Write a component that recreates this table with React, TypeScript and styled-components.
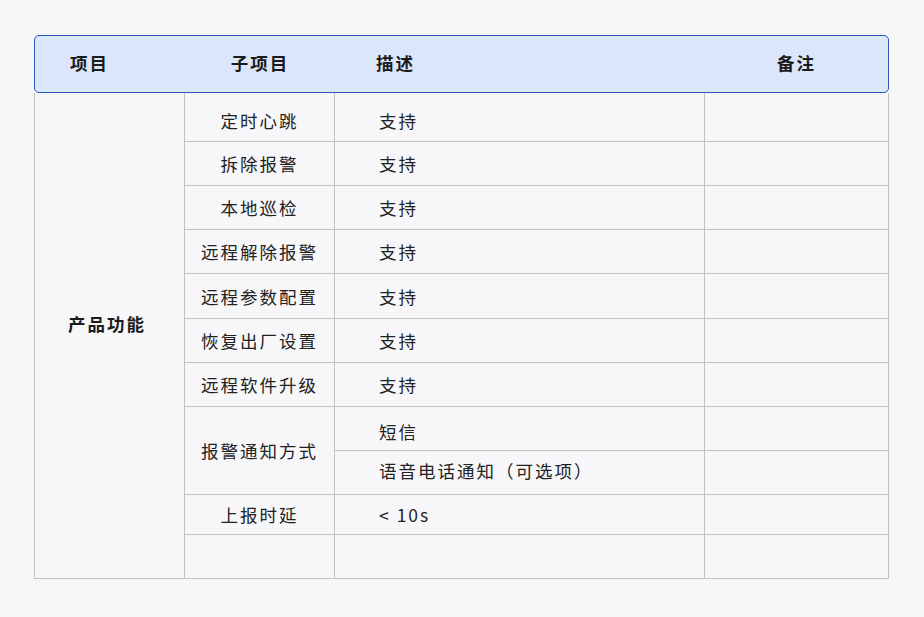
import React from "react";
import styled, { createGlobalStyle } from "styled-components";

const GlobalStyle = createGlobalStyle`
  html, body {
    margin: 0;
    padding: 0;
    background: #f7f7fa;
  }
  body {
    font-family: "Noto Sans CJK SC", "Noto Sans", sans-serif;
    color: #222;
  }
`;

const COLUMNS = "150px 150px 370px 184px";
const HEAD_COLUMNS = "150px 150px 370px 183px";

interface SubRow {
  name: string;
  desc: string;
  height: number;
}

const simpleRows: SubRow[] = [
  { name: "定时心跳", desc: "支持", height: 49 },
  { name: "拆除报警", desc: "支持", height: 44 },
  { name: "本地巡检", desc: "支持", height: 44 },
  { name: "远程解除报警", desc: "支持", height: 44 },
  { name: "远程参数配置", desc: "支持", height: 45 },
  { name: "恢复出厂设置", desc: "支持", height: 44 },
  { name: "远程软件升级", desc: "支持", height: 44 },
];

const notifyRows = [
  { desc: "短信", height: 44, shift: 6 },
  { desc: "语音电话通知（可选项）", height: 44, shift: -4 },
];

const tailRows: SubRow[] = [
  { name: "上报时延", desc: "< 10s", height: 40 },
  { name: "", desc: "", height: 44 },
];

const Page = styled.div`
  padding: 35px 35px 38px 34px;
`;

const Header = styled.div`
  display: grid;
  grid-template-columns: ${HEAD_COLUMNS};
  height: 56px;
  width: 853px;
  background: #dbe6fb;
  border: 1px solid #2657b9;
  border-radius: 5px;
`;

const HeadCell = styled.div<{ $align: "left" | "center"; $pad?: number }>`
  display: flex;
  align-items: center;
  justify-content: ${(p) => (p.$align === "left" ? "flex-start" : "center")};
  padding-left: ${(p) => p.$pad ?? 0}px;
  padding-bottom: 3px;
  font-size: 17.5px;
  font-weight: 700;
  letter-spacing: 2px;
  color: #1b1b1b;
`;

const Body = styled.div<{ $rows: string }>`
  display: grid;
  grid-template-columns: ${COLUMNS};
  grid-template-rows: ${(p) => p.$rows};
  border-left: 1px solid #c3c3c6;
  width: 854px;
`;

const Cell = styled.div<{ $align?: "left" | "center"; $shift?: number }>`
  display: flex;
  align-items: center;
  justify-content: ${(p) => (p.$align === "left" ? "flex-start" : "center")};
  padding-left: ${(p) => (p.$align === "left" ? "44px" : "0")};
  padding-top: ${(p) => Math.max(p.$shift ?? 0, 0)}px;
  padding-bottom: ${(p) => Math.max(-(p.$shift ?? 0), 0)}px;
  border-right: 1px solid #c3c3c6;
  border-bottom: 1px solid #c3c3c6;
  font-size: 17.5px;
  letter-spacing: 2px;
  color: #222;
  white-space: nowrap;
`;

const GroupCell = styled(Cell)<{ $span: number }>`
  grid-row: span ${(p) => p.$span};
  padding-bottom: 24px;
  padding-right: 5px;
  font-weight: 700;
  color: #1b1b1b;
`;

const SpanCell = styled(Cell)<{ $span: number }>`
  grid-row: span ${(p) => p.$span};
`;

export default function App() {
  const heights = [
    ...simpleRows.map((r) => r.height),
    ...notifyRows.map((r) => r.height),
    ...tailRows.map((r) => r.height),
  ];
  const template = heights.map((h) => `${h}px`).join(" ");
  const total = heights.length;

  return (
    <>
      <GlobalStyle />
      <Page>
        <Header>
          <HeadCell $align="left" $pad={35}>项目</HeadCell>
          <HeadCell $align="center">子项目</HeadCell>
          <HeadCell $align="left" $pad={41}>描述</HeadCell>
          <HeadCell $align="center">备注</HeadCell>
        </Header>
        <Body $rows={template}>
          <GroupCell $span={total}>产品功能</GroupCell>
          {simpleRows.map((row, i) => {
            const shift = i === 0 ? 6 : 0;
            return (
              <React.Fragment key={row.name}>
                <Cell $shift={shift}>{row.name}</Cell>
                <Cell $align="left" $shift={shift}>
                  {row.desc}
                </Cell>
                <Cell />
              </React.Fragment>
            );
          })}
          <SpanCell $span={2}>报警通知方式</SpanCell>
          {notifyRows.map((row) => (
            <React.Fragment key={row.desc}>
              <Cell $align="left" $shift={row.shift}>
                {row.desc}
              </Cell>
              <Cell />
            </React.Fragment>
          ))}
          {tailRows.map((row, i) => (
            <React.Fragment key={i}>
              <Cell>{row.name}</Cell>
              <Cell $align="left">{row.desc}</Cell>
              <Cell />
            </React.Fragment>
          ))}
        </Body>
      </Page>
    </>
  );
}
